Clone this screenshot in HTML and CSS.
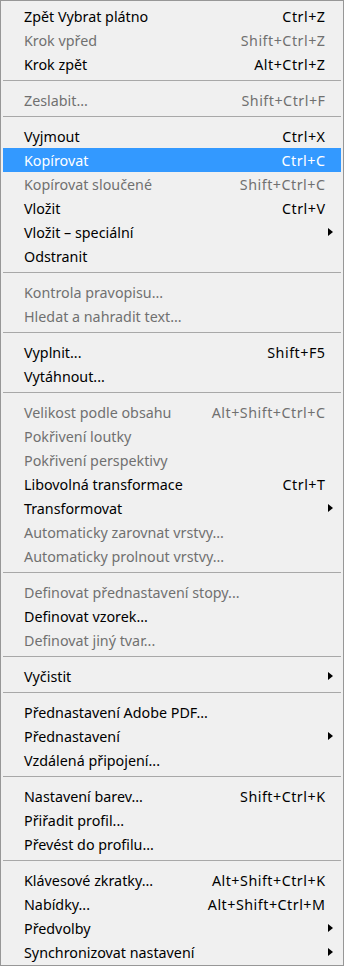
FILE: index.html
```html
<!DOCTYPE html>
<html lang="cs">
<head>
<meta charset="utf-8">
<link rel="stylesheet" href="styles.css">
</head>
<body>
<div class="menu">
  <div class="item"><span class="label">Zpět Vybrat plátno</span><span class="key">Ctrl+Z</span></div>
  <div class="item off"><span class="label">Krok vpřed</span><span class="key">Shift+Ctrl+Z</span></div>
  <div class="item"><span class="label">Krok zpět</span><span class="key">Alt+Ctrl+Z</span></div>
  <div class="sep"></div>
  <div class="item off"><span class="label">Zeslabit...</span><span class="key">Shift+Ctrl+F</span></div>
  <div class="sep"></div>
  <div class="item"><span class="label">Vyjmout</span><span class="key">Ctrl+X</span></div>
  <div class="item active"><span class="label">Kopírovat</span><span class="key">Ctrl+C</span></div>
  <div class="item off"><span class="label">Kopírovat sloučené</span><span class="key">Shift+Ctrl+C</span></div>
  <div class="item"><span class="label">Vložit</span><span class="key">Ctrl+V</span></div>
  <div class="item sub"><span class="label">Vložit – speciální</span><span class="arrow"></span></div>
  <div class="item"><span class="label">Odstranit</span></div>
  <div class="sep"></div>
  <div class="item off"><span class="label">Kontrola pravopisu...</span></div>
  <div class="item off"><span class="label">Hledat a nahradit text...</span></div>
  <div class="sep"></div>
  <div class="item"><span class="label">Vyplnit...</span><span class="key">Shift+F5</span></div>
  <div class="item"><span class="label">Vytáhnout...</span></div>
  <div class="sep"></div>
  <div class="item off"><span class="label">Velikost podle obsahu</span><span class="key">Alt+Shift+Ctrl+C</span></div>
  <div class="item off"><span class="label">Pokřivení loutky</span></div>
  <div class="item off"><span class="label">Pokřivení perspektivy</span></div>
  <div class="item"><span class="label">Libovolná transformace</span><span class="key">Ctrl+T</span></div>
  <div class="item sub"><span class="label">Transformovat</span><span class="arrow"></span></div>
  <div class="item off"><span class="label">Automaticky zarovnat vrstvy...</span></div>
  <div class="item off"><span class="label">Automaticky prolnout vrstvy...</span></div>
  <div class="sep"></div>
  <div class="item off"><span class="label">Definovat přednastavení stopy...</span></div>
  <div class="item"><span class="label">Definovat vzorek...</span></div>
  <div class="item off"><span class="label">Definovat jiný tvar...</span></div>
  <div class="sep"></div>
  <div class="item sub"><span class="label">Vyčistit</span><span class="arrow"></span></div>
  <div class="sep"></div>
  <div class="item"><span class="label">Přednastavení Adobe PDF...</span></div>
  <div class="item sub"><span class="label">Přednastavení</span><span class="arrow"></span></div>
  <div class="item"><span class="label">Vzdálená připojení...</span></div>
  <div class="sep"></div>
  <div class="item"><span class="label">Nastavení barev...</span><span class="key">Shift+Ctrl+K</span></div>
  <div class="item"><span class="label">Přiřadit profil...</span></div>
  <div class="item"><span class="label">Převést do profilu...</span></div>
  <div class="sep"></div>
  <div class="item"><span class="label">Klávesové zkratky...</span><span class="key">Alt+Shift+Ctrl+K</span></div>
  <div class="item"><span class="label">Nabídky...</span><span class="key">Alt+Shift+Ctrl+M</span></div>
  <div class="item sub"><span class="label">Předvolby</span><span class="arrow"></span></div>
  <div class="item sub"><span class="label">Synchronizovat nastavení</span><span class="arrow"></span></div>
</div>
</body>
</html>
```
FILE: styles.css
```css
html, body {
  margin: 0;
  padding: 0;
  background: #f0f0f0;
}
.menu {
  box-sizing: border-box;
  width: 344px;
  height: 966px;
  border: 1px solid #979797;
  padding: 3px 2px 0 2px;
  background: #f0f0f0;
  font-family: "Noto Sans", "Open Sans", sans-serif;
  font-size: 14.3px;
  color: #000;
}
.item {
  display: flex;
  align-items: center;
  height: 24px;
  padding: 0 16px 0 21px;
  white-space: nowrap;
  position: relative;
}
.label {
  flex: 1;
}
.key {
  text-align: right;
  letter-spacing: 0.5px;
  margin-right: -0.5px;
}
.off {
  color: #707070;
}
.active {
  background: #3399ff;
  color: #fff;
}
.sep {
  height: 1px;
  background: #a8a8a8;
  margin: 4px 0 7px 0;
}
.arrow {
  position: absolute;
  right: 8px;
  top: 8px;
  width: 0;
  height: 0;
  border-top: 4.5px solid transparent;
  border-bottom: 4.5px solid transparent;
  border-left: 5px solid #000;
}
```
